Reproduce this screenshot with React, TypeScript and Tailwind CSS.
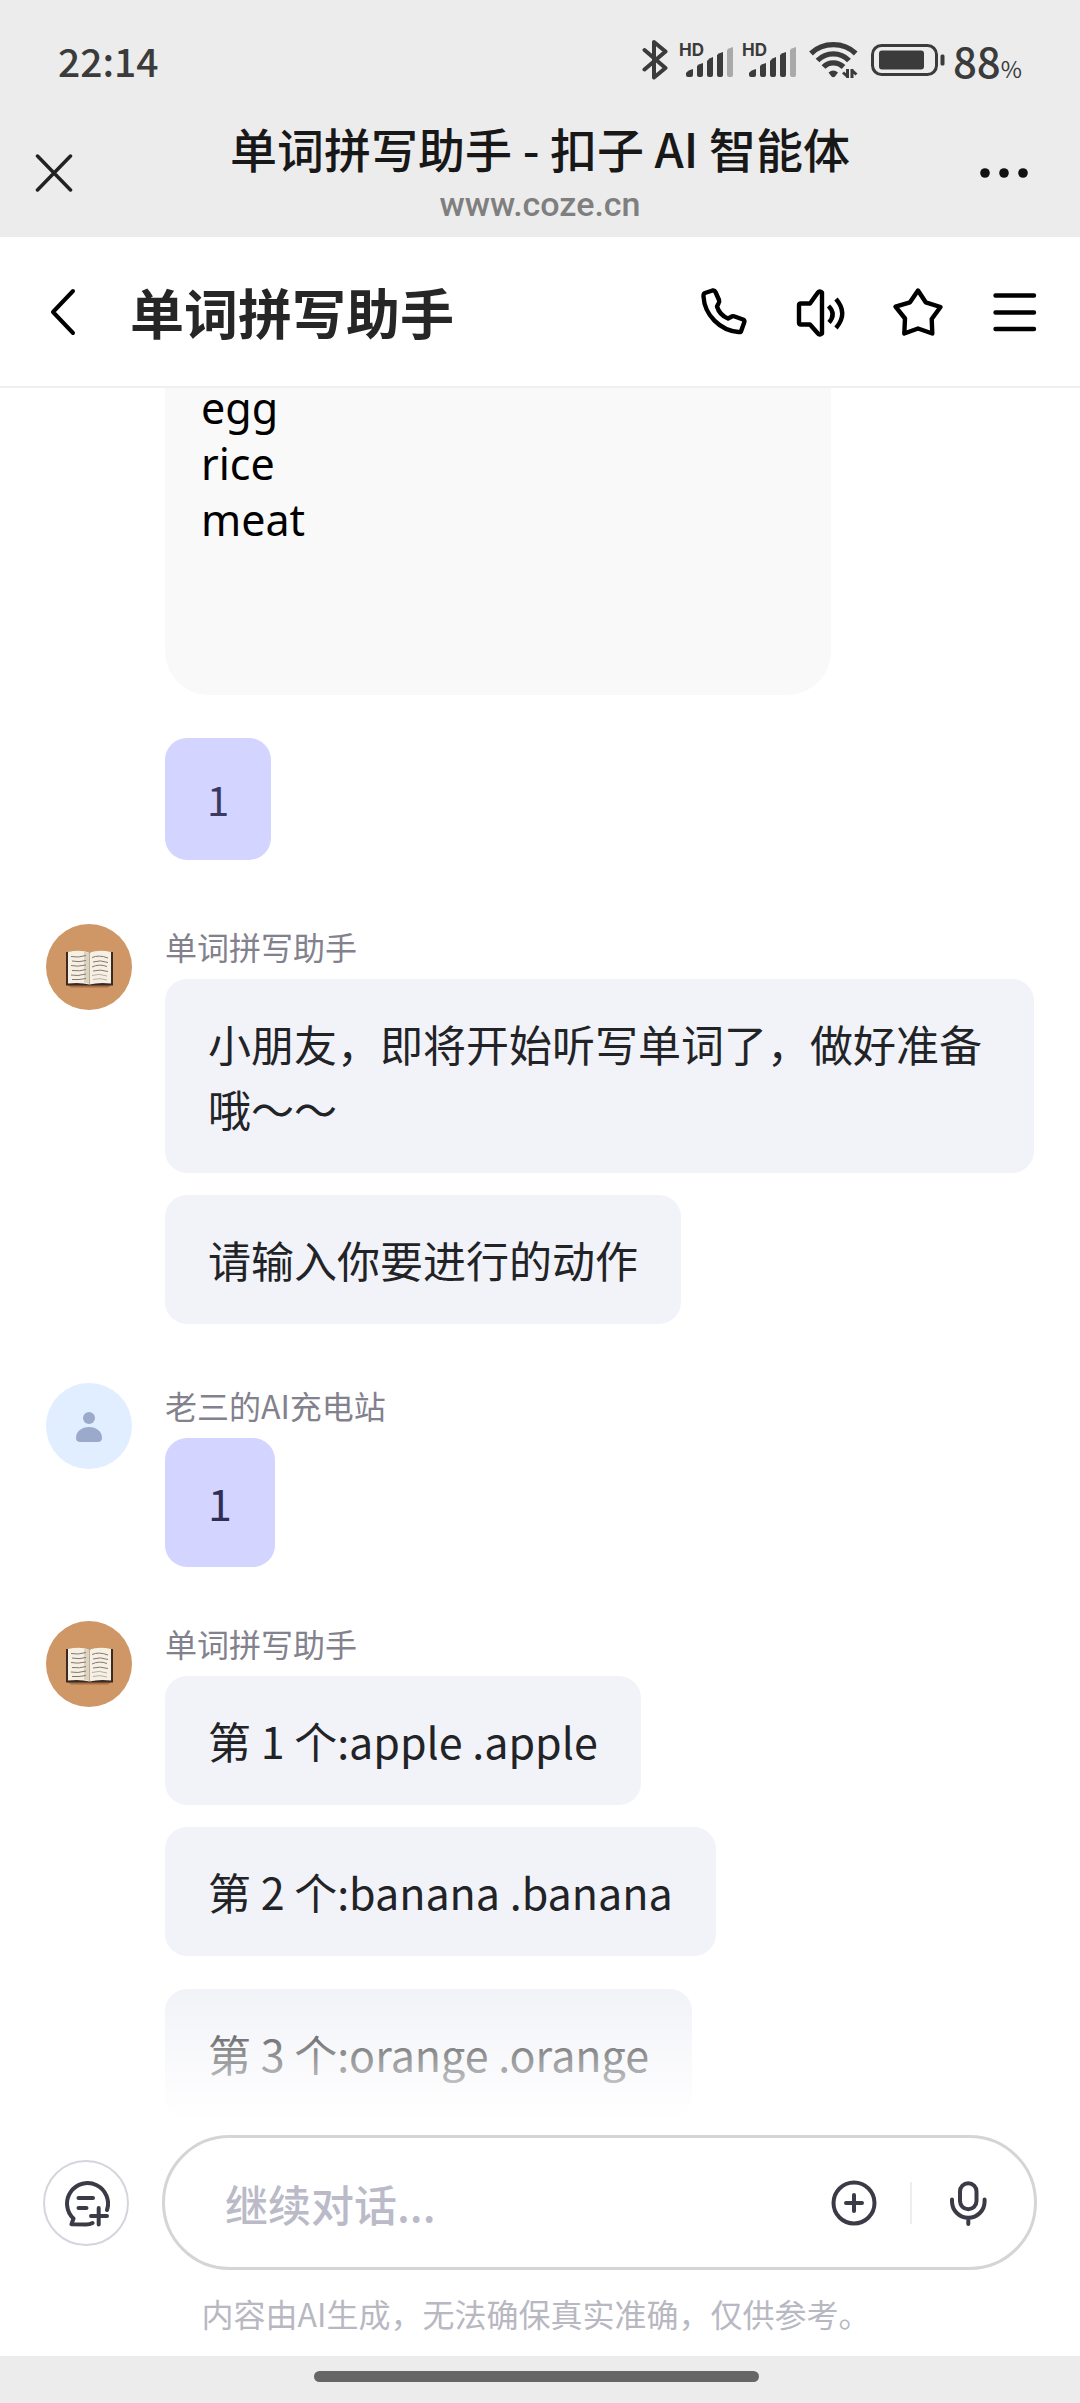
import React from 'react';

const messages = [
  {
    role: 'bot',
    name: '单词拼写助手',
    spacing: 'mt-16',
    bubbles: ['小朋友，即将开始听写单词了，做好准备哦～～', '请输入你要进行的动作'],
  },
  {
    role: 'user',
    name: '老三的AI充电站',
    spacing: 'mt-[59px]',
    bubbles: ['1'],
  },
  {
    role: 'bot',
    name: '单词拼写助手',
    spacing: 'mt-[54px]',
    bubbles: ['第 1 个:apple .apple', '第 2 个:banana .banana'],
    latest: '第 3 个:orange .orange',
  },
];

const Signal: React.FC = () => (
  <svg viewBox="0 0 54 33" className="w-[54px] h-[33px] overflow-visible" fill="#3b3b3b">
    <text x="-1" y="12" fontSize="17" fontWeight="700" fontFamily="Inter, sans-serif">HD</text>
    <path d="M6 31V29Q8 26 13 25V31Q13 33 11 33H8Q6 33 6 31Z" />
    <path d="M17 22Q19 20 23 19V31Q23 33 21 33H19Q17 33 17 31Z" />
    <path d="M27 17Q29 14 33 13V31Q33 33 31 33H29Q27 33 27 31Z" />
    <path d="M37 11Q39 9 43 8V31Q43 33 41 33H39Q37 33 37 31Z" />
    <path d="M47 6Q49 4 53 3V31Q53 33 51 33H49Q47 33 47 31Z" fill="#a9a9a9" />
  </svg>
);

const StatusBar: React.FC = () => (
  <div className="flex h-[120px] items-center justify-between px-[58px] text-[#3b3b3b]">
    <span className="text-[39px] leading-none font-medium">22:14</span>
    <div className="flex items-center gap-3">
      <svg viewBox="0 0 26 40" className="w-[26px] h-10" fill="none" stroke="#3b3b3b" strokeWidth="4" strokeLinejoin="round" strokeLinecap="round">
        <path d="M2.5 10L23.5 28L12 37.5V2L23.5 11.5L2.5 29.5" />
      </svg>
      <div className="flex gap-[9px]">
        <Signal />
        <Signal />
      </div>
      <svg viewBox="0 0 50 38" className="w-[50px] h-[38px]" fill="none" stroke="#3b3b3b" strokeWidth="5.3">
        <path d="M2 12.5Q11 3.7 24.3 3.7T46.7 12.5" />
        <path d="M8.5 19.5Q15 12.8 24.3 12.8T40 19.5" />
        <path d="M14.5 26Q18.5 21.8 24.3 21.8T34.5 26" />
        <path d="M19.5 31.5Q24.3 27.5 29 31.5L26 35.5Q24.3 37 22.5 35.5Z" fill="#3b3b3b" stroke="none" />
        <path d="M38.5 28V37M38.5 35.5L34 31.5M43 37V28M43 29.5L47.5 33.5" strokeWidth="3" />
      </svg>
      <div className="flex items-center gap-2">
        <svg viewBox="0 0 74 32" className="w-[74px] h-8">
          <rect x="1.5" y="1.5" width="64" height="29" rx="9" fill="none" stroke="#3b3b3b" strokeWidth="3" />
          <rect x="8" y="6.5" width="45" height="19" rx="3" fill="#3b3b3b" />
          <rect x="69.5" y="10.5" width="4" height="11" rx="1.5" fill="#3b3b3b" />
        </svg>
        <span className="flex items-baseline leading-none">
          <span className="text-[42px] font-medium">88</span>
          <span className="text-[23px]">%</span>
        </span>
      </div>
    </div>
  </div>
);

const BookAvatar: React.FC = () => (
  <svg viewBox="0 0 86 86" className="size-[86px] shrink-0">
    <circle cx="43" cy="43" r="43" fill="#cf9666" />
    <path d="M21 60.5H66L62 63.5H25Z" fill="#a86f45" />
    <path d="M20 28H67V61.5H20Z" fill="#3b2a22" />
    <path d="M22 28Q34 25.5 43.5 28.5Q53 25.5 65 28V59.5Q53 58 43.5 60.5Q34 58 22 59.5Z" fill="#f6f0e4" />
    <path d="M38 27.5L43.5 29V60L38 58.5Z" fill="#dcd2c0" />
    <path d="M43.5 28.5V60" stroke="#b9ad9c" strokeWidth="1" />
    <g fill="none" stroke="#85766f" strokeWidth="1">
      <path d="M25 32.5Q32 34 40 31.5M26 37Q33 38.5 40 36.5M25 41.5Q31 43 40 41M26 46.5Q34 47.5 40 45.5M25 51Q31 52.5 40 50M26 55.5Q33 56 40 54.5" />
      <path d="M46 33.5Q53 30.5 62 34M47 38Q54 35.5 62 38.5M46 43Q53 39.5 61 42.5M47 47Q54 45 62 47.5" />
      <path d="M46 51.5Q53 49 61 52M47 55.5Q54 53.5 61 56" stroke="#b8afa8" />
    </g>
  </svg>
);

const UserAvatar: React.FC = () => (
  <svg viewBox="0 0 86 86" className="size-[86px] shrink-0">
    <circle cx="43" cy="43" r="43" fill="#e0eeff" />
    <circle cx="43" cy="35" r="6" fill="#9ba9ca" />
    <path d="M30 55C30 48 36 44 43 44S56 48 56 55Q56 59 51.5 59H34.5Q30 59 30 55Z" fill="#9ba9ca" />
  </svg>
);

const headerActions = [
  {
    label: '语音通话',
    icon: (
      <path d="M5 5L12.5 2.5Q14.5 2 15.5 4L19 12Q19.7 14 18.5 15.5L17 18.5C18.5 23.5 23 28.5 28 30.5L31 29Q32.5 27.7 34 28.3L43 31.5Q45 32.5 44.2 34.5L41.5 42Q41 44.5 38.5 44C20 42.5 4.5 27 3.5 8.5Q3.3 5.7 5 5Z" />
    ),
  },
  {
    label: '声音',
    icon: (
      <>
        <path d="M4 15.5H13L20.5 5Q22.5 2 25 4.5V45.5Q22.5 48 20.5 45L13 36.5H4Q2 36.5 2 34.5V17.5Q2 15.5 4 15.5Z" />
        <path d="M31.5 18Q39.5 26 32 34.5M39 11Q51.5 25.5 39 40" strokeLinecap="butt" />
      </>
    ),
  },
  {
    label: '收藏',
    icon: (
      <path d="M24 2.5L31.7 14.3L46.5 19L37.7 31L38.3 45.5L24 40.5L10.3 45.5L11 30.5L1.5 18.7L16 14.3Z" />
    ),
  },
  {
    label: '菜单',
    icon: <path d="M4.5 7.5H43M4.5 24.5H43M4.5 41H43" />,
  },
];

export default function App() {
  return (
    <div className="flex min-h-screen flex-col bg-white font-['Noto_Sans_CJK_SC',sans-serif]">
      <header className="bg-[#ececec]">
        <StatusBar />
        <div className="flex items-start justify-between px-[35px] pb-[5px]">
          <button aria-label="关闭" className="flex h-[106px] w-[72px] items-center">
            <svg viewBox="0 0 38 38" className="size-[38px]" stroke="#222" strokeWidth="3.5" strokeLinecap="round">
              <path d="M2.5 2L35.5 36M35.5 2L2.5 36" />
            </svg>
          </button>
          <div className="text-center">
            <h1 className="text-[47px] leading-[56px] font-medium text-[#181818]">单词拼写助手 - 扣子 AI 智能体</h1>
            <p className="font-['Roboto',sans-serif] text-[34px] leading-[56px] font-medium text-[#7f7f7f]">www.coze.cn</p>
          </div>
          <button aria-label="更多" className="flex h-[106px] w-[72px] items-center justify-end pr-[13px]">
            <svg viewBox="0 0 56 10" className="h-[10px] w-14" fill="#111">
              <circle cx="9" cy="5" r="4.8" />
              <circle cx="28" cy="5" r="4.8" />
              <circle cx="47" cy="5" r="4.8" />
            </svg>
          </button>
        </div>
      </header>

      <nav className="relative z-10 flex h-[151px] items-center border-b-2 border-[#f0f0f0] bg-white pr-[41px] pl-12">
        <button aria-label="返回">
          <svg viewBox="0 0 30 48" className="h-12 w-[30px]" fill="none" stroke="#000" strokeWidth="4" strokeLinecap="round" strokeLinejoin="round">
            <path d="M25 3L5 24L25 45" />
          </svg>
        </button>
        <h2 className="ml-[52px] flex-1 text-[54px] leading-[64px] font-bold text-[#262626]">单词拼写助手</h2>
        <div className="flex gap-[49px]">
          {headerActions.map((action) => (
            <button key={action.label} aria-label={action.label}>
              <svg viewBox="0 0 48 48" className="size-12 overflow-visible" fill="none" stroke="#000" strokeWidth="4.4" strokeLinecap="round" strokeLinejoin="round">
                {action.icon}
              </svg>
            </button>
          ))}
        </div>
      </nav>

      <main className="relative flex-1 px-[46px]">
        <div className="pl-[119px]">
          <div className="-mt-2 w-[666px] max-w-full rounded-b-[44px] bg-[#f9f9f9] pb-[147px] pl-9 font-['Noto_Sans',sans-serif] text-[43px] leading-[56px] text-black">
            <p>egg</p>
            <p>rice</p>
            <p>meat</p>
          </div>
          <button className="mt-[43px] block rounded-[22px] bg-[#d3d4ff] px-[42px] py-[30px] text-[40px] leading-[62px] text-[#3a3a60]">
            1
          </button>
        </div>

        {messages.map((message, idx) => (
          <section key={idx} className={`${message.spacing} flex items-start gap-[33px]`}>
            {message.role === 'bot' ? <BookAvatar /> : <UserAvatar />}
            <div className="flex min-w-0 flex-1 flex-col items-start">
              <p className="mb-[11px] text-[32px] leading-[44px] text-[#82818d]">{message.name}</p>
              <div className="flex flex-col items-start gap-[22px]">
                {message.bubbles.map((text) => (
                  <p
                    key={text}
                    className={`rounded-[22px] px-[43px] py-8 text-[43px] leading-[65px] ${
                      message.role === 'bot' ? 'bg-[#f2f3f8] text-[#222327]' : 'bg-[#d3d4ff] text-[#2f2f55]'
                    }`}
                  >
                    {text}
                  </p>
                ))}
              </div>
              {message.latest && (
                <p className="mt-[33px] rounded-[22px] bg-[#f2f3f8] px-[43px] py-8 text-[43px] leading-[65px] text-[#222327]">
                  {message.latest}
                </p>
              )}
            </div>
          </section>
        ))}

        {/* fades the last bubble out above the composer */}
        <div className="pointer-events-none absolute inset-x-0 bottom-0 h-[132px] bg-linear-to-t from-white to-white/0" />
      </main>

      <footer>
        <div className="flex items-center gap-[33px] px-[43px] pt-[14px]">
          <button aria-label="新建对话" className="flex size-[86px] shrink-0 items-center justify-center rounded-full border-2 border-[#d6d5dd]">
            <svg viewBox="0 0 48 48" className="size-12" fill="none" stroke="#3b3b47" strokeWidth="4" strokeLinecap="round" strokeLinejoin="round">
              <path d="M45 31A20.5 20.5 0 1 0 11.5 39.5L9.5 45.2L24 45.5Q28 45.5 30.5 44" />
              <path d="M16.5 19H31M16.5 29H24.5M29 37H45M36.7 29V45.5" />
            </svg>
          </button>
          <div className="flex h-[135px] min-w-0 flex-1 items-center gap-8 rounded-full border-3 border-[#d5d5d8] pr-[42px] pl-[60px]">
            <input
              type="text"
              aria-label="继续对话"
              placeholder="继续对话..."
              className="min-w-0 flex-1 bg-transparent text-[43px] leading-[64px] font-medium text-[#222327] outline-none placeholder:text-[#babac8]"
            />
            <button aria-label="添加">
              <svg viewBox="0 0 48 48" className="size-12" fill="none" stroke="#3b3b47" strokeWidth="4" strokeLinecap="round">
                <circle cx="24" cy="24" r="20.5" />
                <path d="M16 24H32M24 16V32" />
              </svg>
            </button>
            <span className="h-[42px] w-[2px] bg-[#ededf2]" />
            <button aria-label="语音输入">
              <svg viewBox="0 0 48 48" className="size-12" fill="none" stroke="#3b3b47" strokeWidth="4" strokeLinecap="round">
                <rect x="16" y="4.3" width="16.5" height="26" rx="8.2" />
                <path d="M8 20.5V22.5A16.3 16.3 0 0 0 40.6 22.5V20.5M24.3 39V45" />
              </svg>
            </button>
          </div>
        </div>
        <p className="mt-[21px] mb-[21px] pr-2 text-center text-[32px] leading-[44px] text-[#b8b8c2]">
          内容由AI生成，无法确保真实准确，仅供参考。
        </p>
        <div className="flex h-[47px] justify-center bg-[#ececec] pt-[15px] pr-2">
          <span className="h-[11px] w-[445px] rounded-full bg-[#666]" />
        </div>
      </footer>
    </div>
  );
}
